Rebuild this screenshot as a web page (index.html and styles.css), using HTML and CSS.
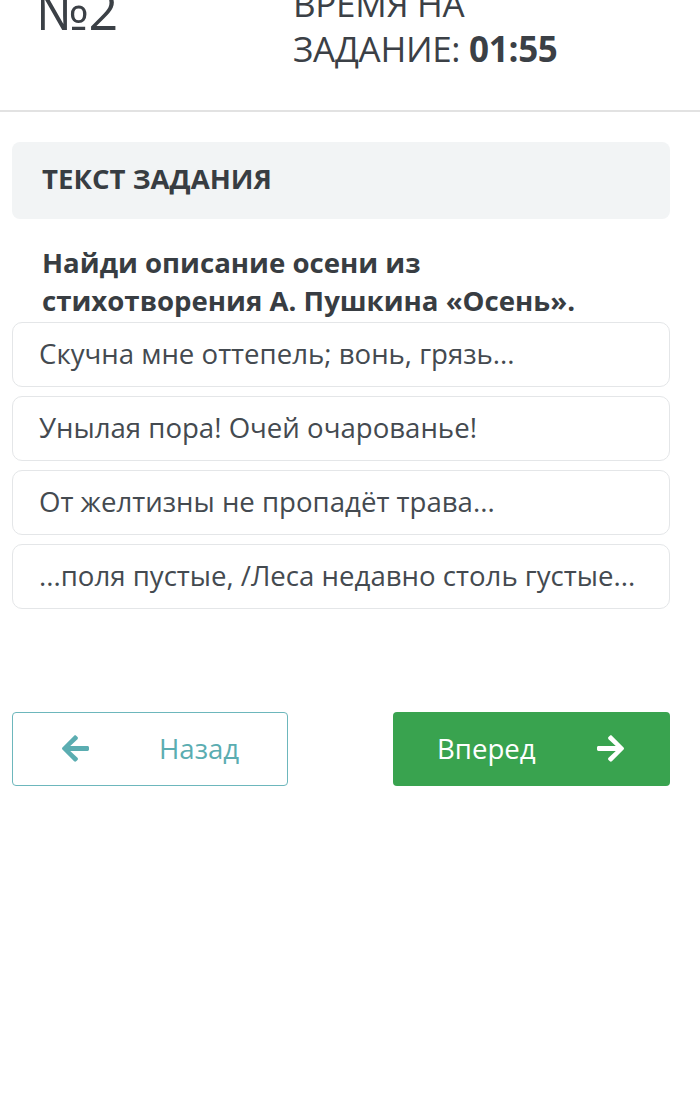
FILE: index.html
```html
<!DOCTYPE html>
<html lang="ru">
<head>
<meta charset="utf-8">
<link rel="stylesheet" href="styles.css">
</head>
<body>
<header class="top">
  <div class="num">№2</div>
  <div class="timer">ВРЕМЯ НА<br>ЗАДАНИЕ: <b>01:55</b></div>
</header>
<main class="content">
  <div class="task-head">ТЕКСТ ЗАДАНИЯ</div>
  <p class="question">Найди описание осени из<br>стихотворения А. Пушкина «Осень».</p>
  <ul class="options">
    <li class="option">Скучна мне оттепель; вонь, грязь...</li>
    <li class="option">Унылая пора! Очей очарованье!</li>
    <li class="option">От желтизны не пропадёт трава...</li>
    <li class="option">...поля пустые, /Леса недавно столь густые...</li>
  </ul>
  <div class="nav">
    <button class="btn btn-back">
      <svg class="ico" viewBox="0 0 448 512"><path d="M257.5 445.1l-22.2 22.2c-9.4 9.4-24.6 9.4-33.9 0L7 273c-9.4-9.4-9.4-24.6 0-33.9L201.4 44.7c9.4-9.4 24.6-9.4 33.9 0l22.2 22.2c9.5 9.5 9.3 25-.4 34.3L136.6 216H424c13.3 0 24 10.7 24 24v32c0 13.3-10.7 24-24 24H136.6l120.5 114.8c9.8 9.3 10 24.8.4 34.3z"/></svg>
      <span class="btn-label">Назад</span>
    </button>
    <button class="btn btn-next">
      <span class="btn-label">Вперед</span>
      <svg class="ico" viewBox="0 0 448 512"><path d="M190.5 66.9l22.2-22.2c9.4-9.4 24.6-9.4 33.9 0L441 239c9.4 9.4 9.4 24.6 0 33.9L246.6 467.3c-9.4 9.4-24.6 9.4-33.9 0l-22.2-22.2c-9.5-9.5-9.3-25 .4-34.3L311.4 296H24c-13.3 0-24-10.7-24-24v-32c0-13.3 10.7-24 24-24h287.4L190.9 101.2c-9.8-9.3-10-24.8-.4-34.3z"/></svg>
    </button>
  </div>
</main>
</body>
</html>
```
FILE: styles.css
```css
html, body {
  margin: 0;
  padding: 0;
  background: #ffffff;
}
body {
  font-family: "Open Sans", "Noto Sans", sans-serif;
  color: #3b4046;
  overflow: hidden;
}
.top {
  display: flex;
  align-items: flex-start;
  margin-top: -18px;
  height: 130px;
  border-bottom: 2px solid #e2e2e2;
  box-sizing: border-box;
  padding-left: 36px;
}
.num {
  font-size: 52px;
  line-height: 56px;
  width: 257px;
  letter-spacing: -0.5px;
}
.timer {
  font-size: 35px;
  line-height: 45px;
  margin-top: -1px;
  letter-spacing: -0.3px;
}
.timer b {
  font-weight: 700;
}
.content {
  padding: 30px 30px 0 12px;
}
.task-head {
  background: #f2f4f5;
  border-radius: 8px;
  height: 77px;
  box-sizing: border-box;
  padding-bottom: 5px;
  display: flex;
  align-items: center;
  padding-left: 30px;
  font-weight: 700;
  font-size: 27.6px;
  color: #383d42;
}
.question {
  margin: 24px 0 0 0;
  padding-left: 30px;
  font-weight: 700;
  font-size: 27.6px;
  line-height: 38px;
  color: #383d42;
}
.options {
  list-style: none;
  margin: 3px 0 0 0;
  padding: 0;
  display: flex;
  flex-direction: column;
  gap: 9px;
}
.option {
  height: 65px;
  box-sizing: border-box;
  border: 1px solid #e4e6e8;
  border-radius: 10px;
  display: flex;
  align-items: center;
  padding-left: 26px;
  padding-bottom: 3px;
  font-size: 27.6px;
  color: #444a50;
}
.nav {
  margin-top: 103px;
  display: grid;
  grid-template-columns: 276px 277px;
  justify-content: space-between;
}
.btn {
  height: 74px;
  border-radius: 4px;
  font-family: "Open Sans", "Noto Sans", sans-serif;
  font-size: 27.6px;
  display: flex;
  align-items: center;
  padding: 0 0 2px 0;
  box-sizing: border-box;
}
.btn-back {
  background: #fff;
  border: 1px solid #6db7bc;
  color: #5badb1;
  padding-left: 49px;
}
.btn-back .ico {
  fill: #5badb1;
  margin-right: 70px;
}
.btn-next {
  background: #39a34f;
  border: none;
  color: #fff;
  padding-left: 44px;
}
.btn-next .ico {
  fill: #fff;
  margin-left: 61px;
}
.ico {
  width: 27px;
  height: 31px;
}
```
